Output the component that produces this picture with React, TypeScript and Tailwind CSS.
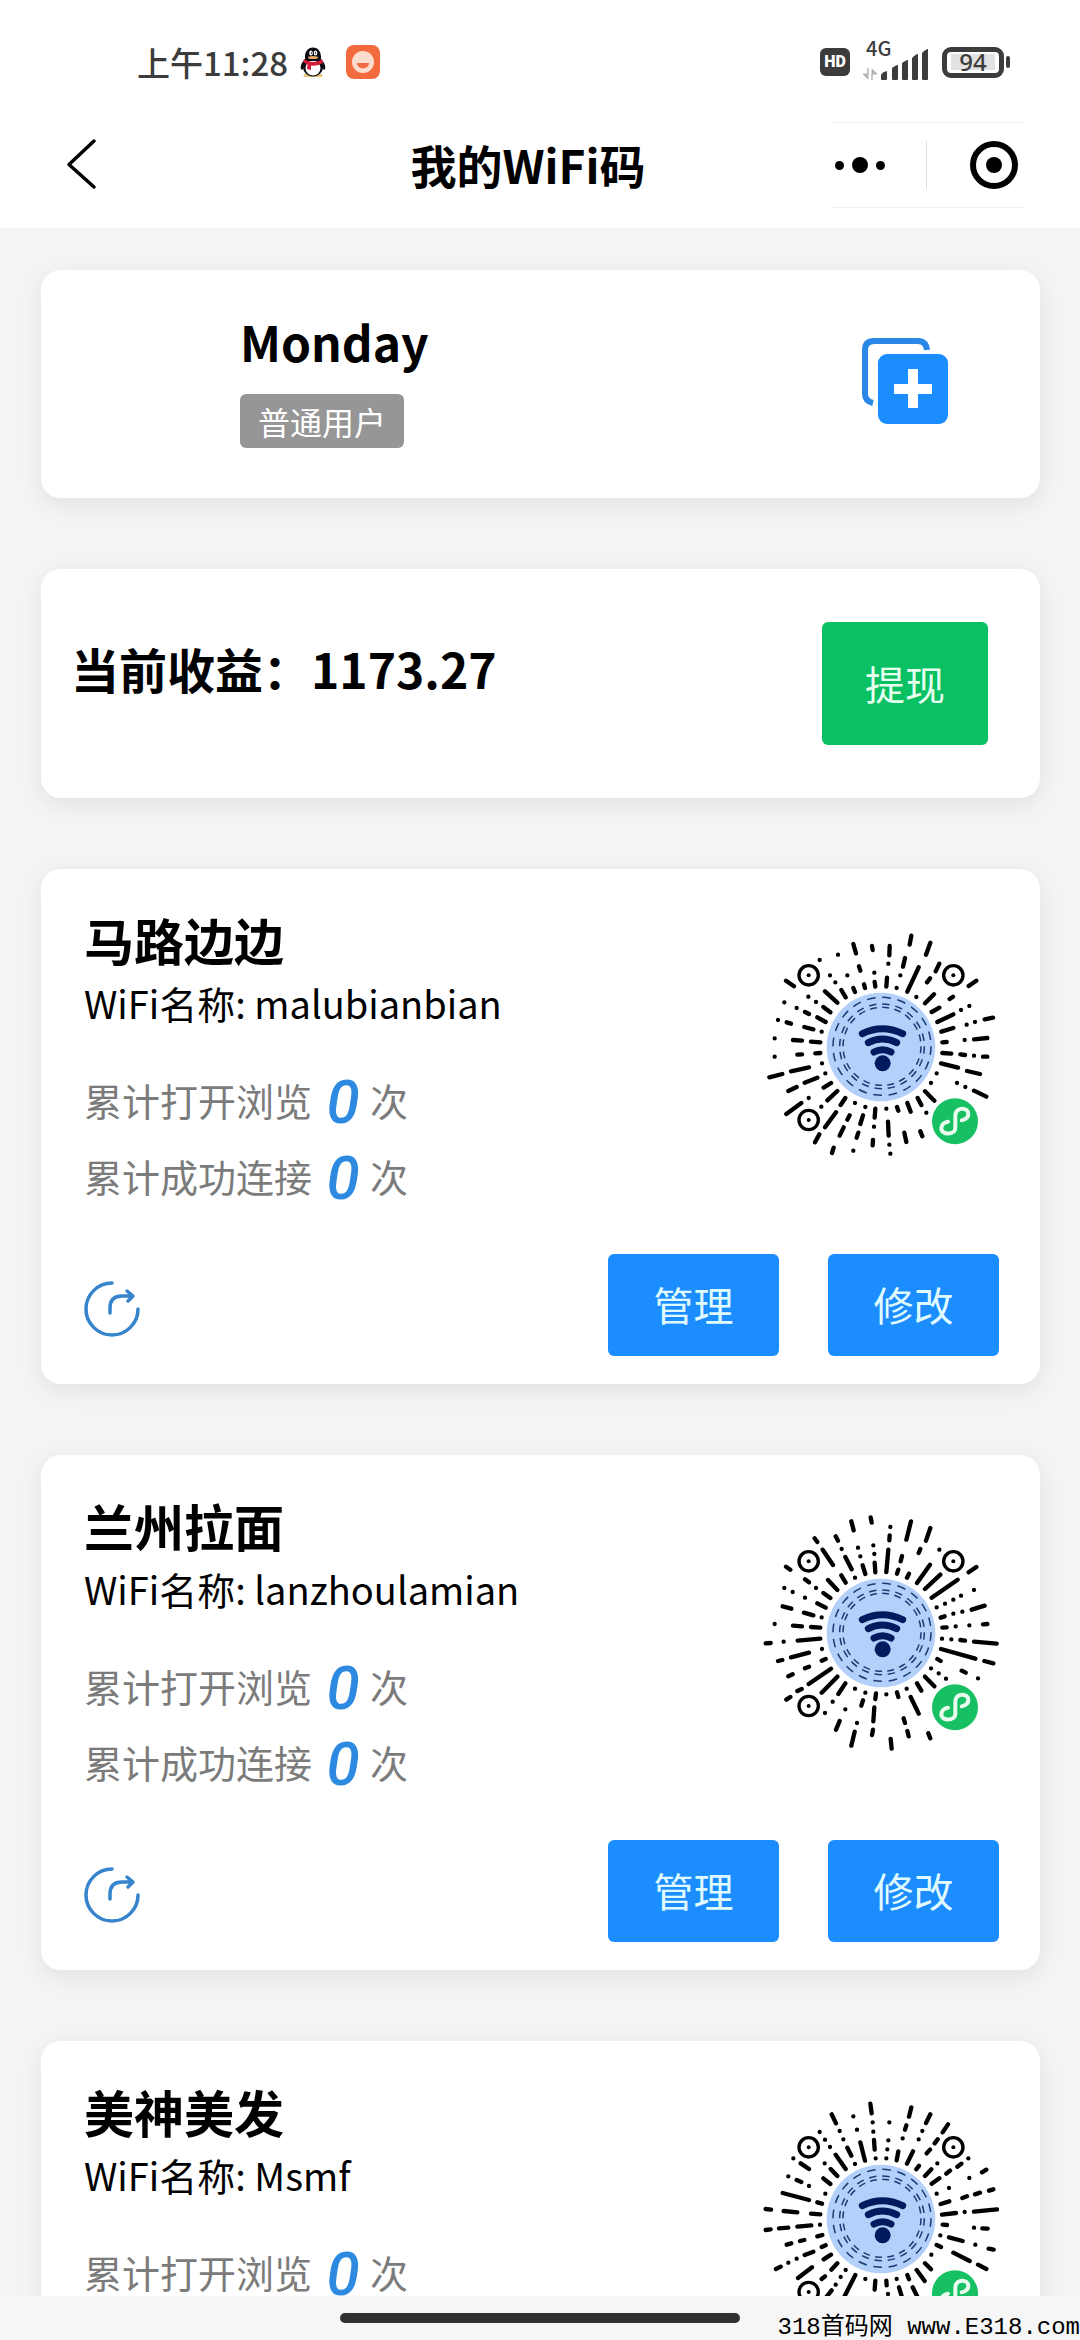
type WifiCode = {
  name: string;
  ssid: string;
  views: number;
  connects: number;
  cy: number;
  rays: string;
};

const codes: WifiCode[] = [
  {
    name: "马路边边",
    ssid: "malubianbian",
    views: 0,
    connects: 0,
    cy: 441,
    rays:
      "M516 107L511 134M573 128L560 164M497 174L491 200M600 191L589 214M538 202L504 275M451 138L450 166M447 191h0M483 226h0M572 235L563 247M443 233L441 260M472 264h0M531 291h0M584 283L557 310M641 290L631 297M711 242L688 258M690 318h0M665 330h0M600 323L577 336M642 343L594 366M761 353L736 358M707 366h0M682 374h0M642 384L606 395M744 414L704 418M676 420h0M622 426L609 427" +
      "M609 459L636 461M663 463L677 465M704 467h0M731 470L744 470M605 490L656 503M683 513L722 522M592 520h0M653 549h0M678 561h0M704 572L741 590M575 549h0M557 574L585 602M535 594L546 615M561 638h0M504 609L514 635M473 621L477 632M441 626h0" +
      "M342 132L350 160M296 164h0M398 138L400 150M241 180h0M359 199L363 212M324 226h0M405 218h0M272 226h0M288 247h0M140 242L164 259M406 246L408 260M374 253L377 264M342 264L347 276M306 270L319 292M257 274L294 308M207 290h0M230 306h0M252 321L273 337M135 307h0M172 324h0M197 336L209 342M234 352L259 366M116 360h0M142 367L155 371M195 381L222 388M247 395h0M106 415h0M161 420L188 422M215 425L243 427" +
      "M228 460L243 459M174 464L188 463M106 470h0M248 490h0M155 514L209 502M90 532L129 522M258 520h0M196 548L234 533M147 573L172 561M253 563L275 549M264 601L294 573M208 594h0M141 642L186 609M246 620h0M304 615L318 594M347 609h0M378 621h0M408 626L406 653M257 682L290 637M371 646L363 672M331 646L324 659M313 682L301 707M357 698L352 713M404 680h0M446 665L448 707M240 703L227 727M283 743L278 759M342 752h0M401 720L400 736M450 734h0M453 761h0M495 698L501 726M543 694L549 709",
  },
  {
    name: "兰州拉面",
    ssid: "lanzhoulamian",
    views: 0,
    connects: 0,
    cy: 430,
    rays:
      "M336 95L343 122M394 83L397 99M453 112h0M515 95L501 150M573 115L560 153M451 137L450 152M226 146L234 157M289 140L296 153M402 167h0M356 174h0M307 178h0M250 180L281 226M405 193h0M363 200h0M318 202L337 239M447 180L441 247M543 178L538 190M600 180h0M488 199L484 215M477 240L473 252M572 225L533 280M603 255L557 298M655 270L577 324M711 232L688 248M509 252L503 264M704 301h0M406 219L408 248M370 227L378 253M347 264h0M306 257L319 279M266 271L294 301M230 295h0M197 269L209 278M140 231L153 240M135 295h0M160 307h0M197 324h0M252 310L273 325M234 341L259 354M130 350L156 357M194 369L222 377M247 383h0M106 403h0M161 408L188 410M215 412L243 414" +
      "M592 353h0M617 342h0M642 330h0M665 318h0M736 348L697 360M616 380L604 384M642 372h0M669 366h0M744 403L731 404M690 407h0M649 410h0M622 413L609 414M608 447h0M636 449h0M663 451L677 453M704 456L772 462M605 478L708 507M735 514L762 521M594 508L604 514M575 536h0M598 551h0M620 567h0M667 543L679 549M716 566h0" +
      "M79 461L94 460M133 456h0M175 453L243 447M248 478h0M155 503L209 489M116 514L129 511M247 513L259 508M197 536L209 531M147 560L160 554M208 583L275 537M247 609L294 561M174 604L187 598M141 630L153 622M297 613L318 581M347 597h0M378 609h0M410 611L408 628M441 614h0M473 608L477 622M502 597h0M533 581L546 603M557 561L585 590M514 622L538 672M371 632L366 648M280 636h0M257 670h0M318 659h0M405 653L402 695M301 694L290 720M353 700h0M346 726L336 768M401 720L398 736M454 748L457 777M493 686L497 700M504 724L508 740M567 731L573 746",
  },
  {
    name: "美神美发",
    ssid: "Msmf",
    views: 0,
    connects: 0,
    cy: 447,
    rays:
      "M277 133L290 160M342 139h0M393 101L397 130M400 157h0M402 185h0M450 157h0M516 112L509 140M573 133L560 159M501 166L497 179M241 186h0M301 183h0M353 179h0M257 209h0M312 208h0M272 231h0M324 233L336 257M363 217L377 272M404 210L406 239M447 211h0M444 238h0M409 265h0M441 265h0M490 205h0M549 183h0M538 208h0M626 163L610 187M595 208L586 220M572 239L562 250M521 244L503 281M477 244L472 271M594 280h0M539 287L531 298M576 298L557 318M600 325L577 341M687 265h0M666 281L654 290M632 302L621 311M741 299L728 307M690 324h0M629 354h0M592 371h0M762 358L749 362M722 368L707 373M683 379L669 384M630 394L604 402M773 418L704 425M676 426h0M650 429L608 434M610 464L623 465M704 473h0M729 475L745 476M603 496h0M629 502L670 513M708 524h0M748 536L763 539M592 525L605 531M576 554h0M642 548L691 573M716 584L741 597M557 580L575 598M532 600L556 633" +
      "M162 265h0M184 280L209 297M256 280h0M147 319h0M172 330L186 336M209 348h0M289 254L319 297M347 282h0M274 297L294 318M252 325L273 342M258 371h0M130 369L209 390M234 397L248 401M79 417L95 419M133 423L174 427M215 431L243 433M242 464h0M174 470L216 466M119 475L147 473M79 480L94 478M234 499L249 495M182 513L195 510M142 524L156 520M247 531L259 526M196 555L222 545M172 566h0M147 578h0M110 597L124 590M253 568L275 554M276 599L294 580M176 624L218 592M247 627L257 619M319 600h0M304 621h0M289 644h0M348 615L315 680M277 661L262 680M378 627h0M408 632L406 659M441 632L442 646M446 672h0M472 627h0M504 615L509 628M479 652L488 682M520 652L535 682",
  },
];

const card =
  "rounded-[20px] bg-white shadow-[0_6px_24px_rgba(0,0,0,0.08)]";

function QQIcon() {
  return (
    <svg viewBox="0 0 26 32" className="h-8 w-[26px]" aria-hidden="true">
      <path d="M5 29.500h7M14 29.500h7" stroke="#e9c67c" strokeWidth="3" strokeLinecap="round" />
      <path d="M5 13C2 16 0 20 1 23c1 2 3-1 3-1h18s2 3 3 1c1-3-1-7-4-10z" fill="#0b0b14" />
      <ellipse cx="13" cy="21" rx="10" ry="9.500" fill="#0b0b14" />
      <ellipse cx="13" cy="22" rx="7.500" ry="7.500" fill="#fff" />
      <path d="M5 12C4-2 22-2 21 12c0 4-16 4-16 0z" fill="#0b0b14" />
      <path d="M4 13c5 4 13 4 18 0l1 4c-3 2-8 3-12 2.500V24l-4-1 .5-4.500L3 16z" fill="#d41c38" />
      <ellipse cx="11" cy="7" rx="1.800" ry="2.500" fill="#fff" />
      <ellipse cx="15.500" cy="7" rx="1.800" ry="2.500" fill="#fff" />
      <path d="M11 7h1M15 7h1" stroke="#0b0b14" strokeWidth="1.500" />
      <ellipse cx="13" cy="11.500" rx="5" ry="1.500" fill="#e5ab67" />
    </svg>
  );
}

function FaceIcon() {
  return (
    <svg viewBox="0 0 34 34" className="size-[34px]" aria-hidden="true">
      <rect width="34" height="34" rx="8" fill="#f26b3f" />
      <circle cx="17" cy="17" r="11" fill="#fbdccd" />
      <path d="M11 18h12c0 7-12 7-12 0z" fill="#ee6a45" />
    </svg>
  );
}

function SignalIcon() {
  return (
    <svg viewBox="0 0 66 36" className="h-9 w-[66px]" aria-hidden="true">
      <g fill="#3c3c3c">
        <path d="M19 35v-4q1-3 6-4v8q0 1-1 1h-4q-1 0-1-1z" />
        <path d="M30 24q4-3 6-3v14q0 1-1 1h-4q-1 0-1-1z" />
        <path d="M40 19q4-3 6-3v19q0 1-1 1h-4q-1 0-1-1z" />
        <path d="M50 14q4-4 6-4v25q0 1-1 1h-4q-1 0-1-1z" />
        <path d="M60 9q4-4 6-4v30q0 1-1 1h-4q-1 0-1-1z" />
      </g>
      <path d="M6 24v11l-5-5h5zM10 36V25l5 5h-5z" fill="#b4b4b4" stroke="#b4b4b4" />
    </svg>
  );
}

function StatusBar() {
  return (
    <div className="flex h-[124px] items-center justify-between pl-[137px] pr-[70px] text-[#3c3c3c]">
      <div className="flex items-center">
        <span className="text-[33px] font-medium leading-10">上午11:28</span>
        <span className="ml-3">
          <QQIcon />
        </span>
        <span className="ml-5">
          <FaceIcon />
        </span>
      </div>
      <div className="flex items-center">
        <span className="flex h-7 w-[30px] items-center justify-center rounded-md bg-[#3c3c3c] font-[Roboto] text-base font-black text-white">
          HD
        </span>
        <div className="relative ml-3">
          <SignalIcon />
          <span className="absolute -top-2 left-1 text-xl font-medium leading-6">4G</span>
        </div>
        <div className="ml-[14px] flex h-[31px] w-[62px] items-center justify-center rounded-[9px] border-[5px] border-[#3c3c3c]">
          <span className="bg-[#e2e2e2] px-2 font-['Noto_Sans'] text-2xl font-medium leading-4">94</span>
        </div>
        <span className="ml-[2px] h-3 w-1 rounded-sm bg-[#3c3c3c]" />
      </div>
    </div>
  );
}

function NavBar() {
  return (
    <div className="grid h-[104px] grid-cols-[1fr_auto_1fr] items-start">
      <button type="button" aria-label="返回" className="ml-[66px] mt-[14px] w-8">
        <svg viewBox="0 0 32 52" className="h-[52px] w-8" fill="none" stroke="#000" strokeWidth="3.500" strokeLinecap="round" strokeLinejoin="round">
          <path d="M28 3L3 26.500 28 49" />
        </svg>
      </button>
      <h1 className="mr-6 mt-[10px] text-[46px] font-bold leading-[60px] text-black">我的WiFi码</h1>
      <div className="-mt-[2px] mr-14 flex h-[86px] w-48 items-center justify-self-end border-y border-[#f0f0f0]">
        <button type="button" aria-label="更多" className="flex flex-1 items-center gap-2 pl-[3px]">
          <span className="size-[9px] rounded-full bg-black" />
          <span className="size-4 rounded-full bg-black" />
          <span className="size-[9px] rounded-full bg-black" />
        </button>
        <span className="h-12 w-px bg-[#dddddd]" />
        <button type="button" aria-label="关闭" className="flex flex-1 justify-end pr-[6px]">
          <span className="flex size-12 items-center justify-center rounded-full border-[6px] border-black">
            <span className="size-4 rounded-full bg-black" />
          </span>
        </button>
      </div>
    </div>
  );
}

function AddIcon() {
  return (
    <svg viewBox="0 0 86 86" className="size-[86px]" aria-hidden="true">
      <path d="M11 65q-8-2-8-9V12q0-9 9-9h44q8 0 9 9" fill="none" stroke="#2a87e8" strokeWidth="6" />
      <rect x="16" y="16" width="70" height="70" rx="9" fill="#1b8dff" />
      <path d="M51 31v39M32 51h38" stroke="#fff" strokeWidth="10" />
    </svg>
  );
}

function ShareIcon() {
  return (
    <svg viewBox="0 0 56 58" className="h-[58px] w-14" fill="none" stroke="#3584cc" strokeWidth="3.500" strokeLinecap="round" strokeLinejoin="round">
      <path d="M28 3A26 26 0 1 0 54 29" />
      <path d="M26 33V28Q26 16 38 16H48M43 11l6 5-5 5" />
    </svg>
  );
}

function MiniProgramCode({ cy, rays }: { cy: number; rays: string }) {
  return (
    <svg viewBox={`71 ${cy - 354} 708 708`} className="size-[236px]" role="img" aria-label="小程序码">
      <path d={rays} fill="none" stroke="#000" strokeWidth="13" strokeLinecap="round" />
      <g transform={`translate(0 ${cy - 441})`}>
        {[
          [208, 226],
          [642, 226],
          [208, 660],
        ].map(([x, y]) => (
          <g key={`${x}-${y}`}>
            <circle cx={x} cy={y} r="29" fill="#fff" stroke="#000" strokeWidth="10" />
            <circle cx={x} cy={y} r="6" />
          </g>
        ))}
        <circle cx="425" cy="441" r="163" fill="#b3d0fa" />
        <g fill="none" stroke="#1b3a74" strokeWidth="4.500">
          <circle cx="428" cy="439" r="147" pathLength="200" strokeDasharray="5.600 4.400" />
          <circle cx="428" cy="439" r="127" pathLength="200" strokeDasharray="5.600 4.400" />
          <circle cx="428" cy="439" r="117" pathLength="200" strokeDasharray="5.600 4.400" />
        </g>
        <g fill="none" stroke="#001c5e" strokeWidth="21" strokeLinecap="round">
          <path d="M369 401Q429 371 490 401" />
          <path d="M387 428Q429 406 472 428" />
          <path d="M404 456Q430 442 455 456" />
        </g>
        <circle cx="430" cy="490" r="24" fill="#001c5e" />
        <circle cx="647" cy="664" r="69" fill="#17c063" />
        <path
          d="M667 661C681 658 687 650 687 642C687 620 648 620 648 647V683C648 706 606 706 606 685C606 675 614 667 626 665"
          fill="none"
          stroke="#e9fbef"
          strokeWidth="12"
          strokeLinecap="round"
        />
      </g>
    </svg>
  );
}

function Stat({ label, value }: { label: string; value: number }) {
  return (
    <p className="flex h-19 items-center text-[38px] text-[#7b7b7b]">
      {label}
      <span className="w-[58px] pl-1 pt-2 text-center font-[Roboto] text-[60px] font-medium italic leading-none text-[#2e8ae0]">
        {value}
      </span>
      次
    </p>
  );
}

function CodeCard({ item }: { item: WifiCode }) {
  return (
    <section className={`${card} pb-7 pl-[43px] pr-[41px] pt-10`}>
      <div className="flex items-start justify-between">
        <div>
          <h2 className="text-[50px] font-bold leading-[60px] text-black">{item.name}</h2>
          <p className="mt-[6px] text-[38px] leading-14 text-black">WiFi名称: {item.ssid}</p>
          <div className="mt-[30px]">
            <Stat label="累计打开浏览" value={item.views} />
            <Stat label="累计成功连接" value={item.connects} />
          </div>
        </div>
        <div className="mt-5">
          <MiniProgramCode cy={item.cy} rays={item.rays} />
        </div>
      </div>
      <div className="mt-[41px] flex items-center">
        <button type="button" aria-label="分享" className="mt-2">
          <ShareIcon />
        </button>
        <div className="ml-auto flex gap-[49px]">
          {["管理", "修改"].map((action) => (
            <button key={action} type="button" className="h-[102px] w-[171px] rounded-md bg-[#1b8dff] pb-[2px] text-[40px] text-[#e0fbff]">
              {action}
            </button>
          ))}
        </div>
      </div>
    </section>
  );
}

export default function App() {
  return (
    <div className="flex h-screen flex-col overflow-hidden bg-[#f4f4f4] font-['Noto_Sans_CJK_SC',sans-serif]">
      <header className="shrink-0 bg-white">
        <StatusBar />
        <NavBar />
      </header>

      <main className="flex min-h-0 flex-1 flex-col gap-[71px] overflow-hidden pl-[41px] pr-10 pt-[42px] *:shrink-0">
        <section className={`${card} flex items-start justify-between pb-[50px] pl-[199px] pr-[92px] pt-9`}>
          <div className="flex flex-col items-start">
            <h2 className="text-[48px] font-bold leading-[70px] text-black">Monday</h2>
            <span className="mt-[18px] rounded-md bg-[#969696] px-[18px] text-[32px] leading-[54px] text-white">普通用户</span>
          </div>
          <button type="button" aria-label="添加" className="mt-8">
            <AddIcon />
          </button>
        </section>

        <section className={`${card} flex items-start justify-between pb-[53px] pl-[30px] pr-[52px] pt-[53px]`}>
          <p className="mt-[14px] text-[48px] font-bold leading-[64px] text-black">当前收益：1173.27</p>
          <button type="button" className="h-[123px] w-[166px] rounded-md bg-[#09c062] pb-[2px] text-[40px] text-[#e6ffef]">
            提现
          </button>
        </section>

        {codes.map((item) => (
          <CodeCard key={item.name} item={item} />
        ))}
      </main>

      <footer className="grid h-11 shrink-0 grid-cols-[1fr_auto_1fr] items-center bg-[#f6f6f6]">
        <span />
        <span className="h-[10px] w-[400px] rounded-full bg-[#303030]" />
        <span className="mt-5 whitespace-nowrap text-right font-['Liberation_Mono','Noto_Sans_CJK_SC',monospace] text-2xl leading-6 text-black">
          318首码网 www.E318.com
        </span>
      </footer>
    </div>
  );
}
